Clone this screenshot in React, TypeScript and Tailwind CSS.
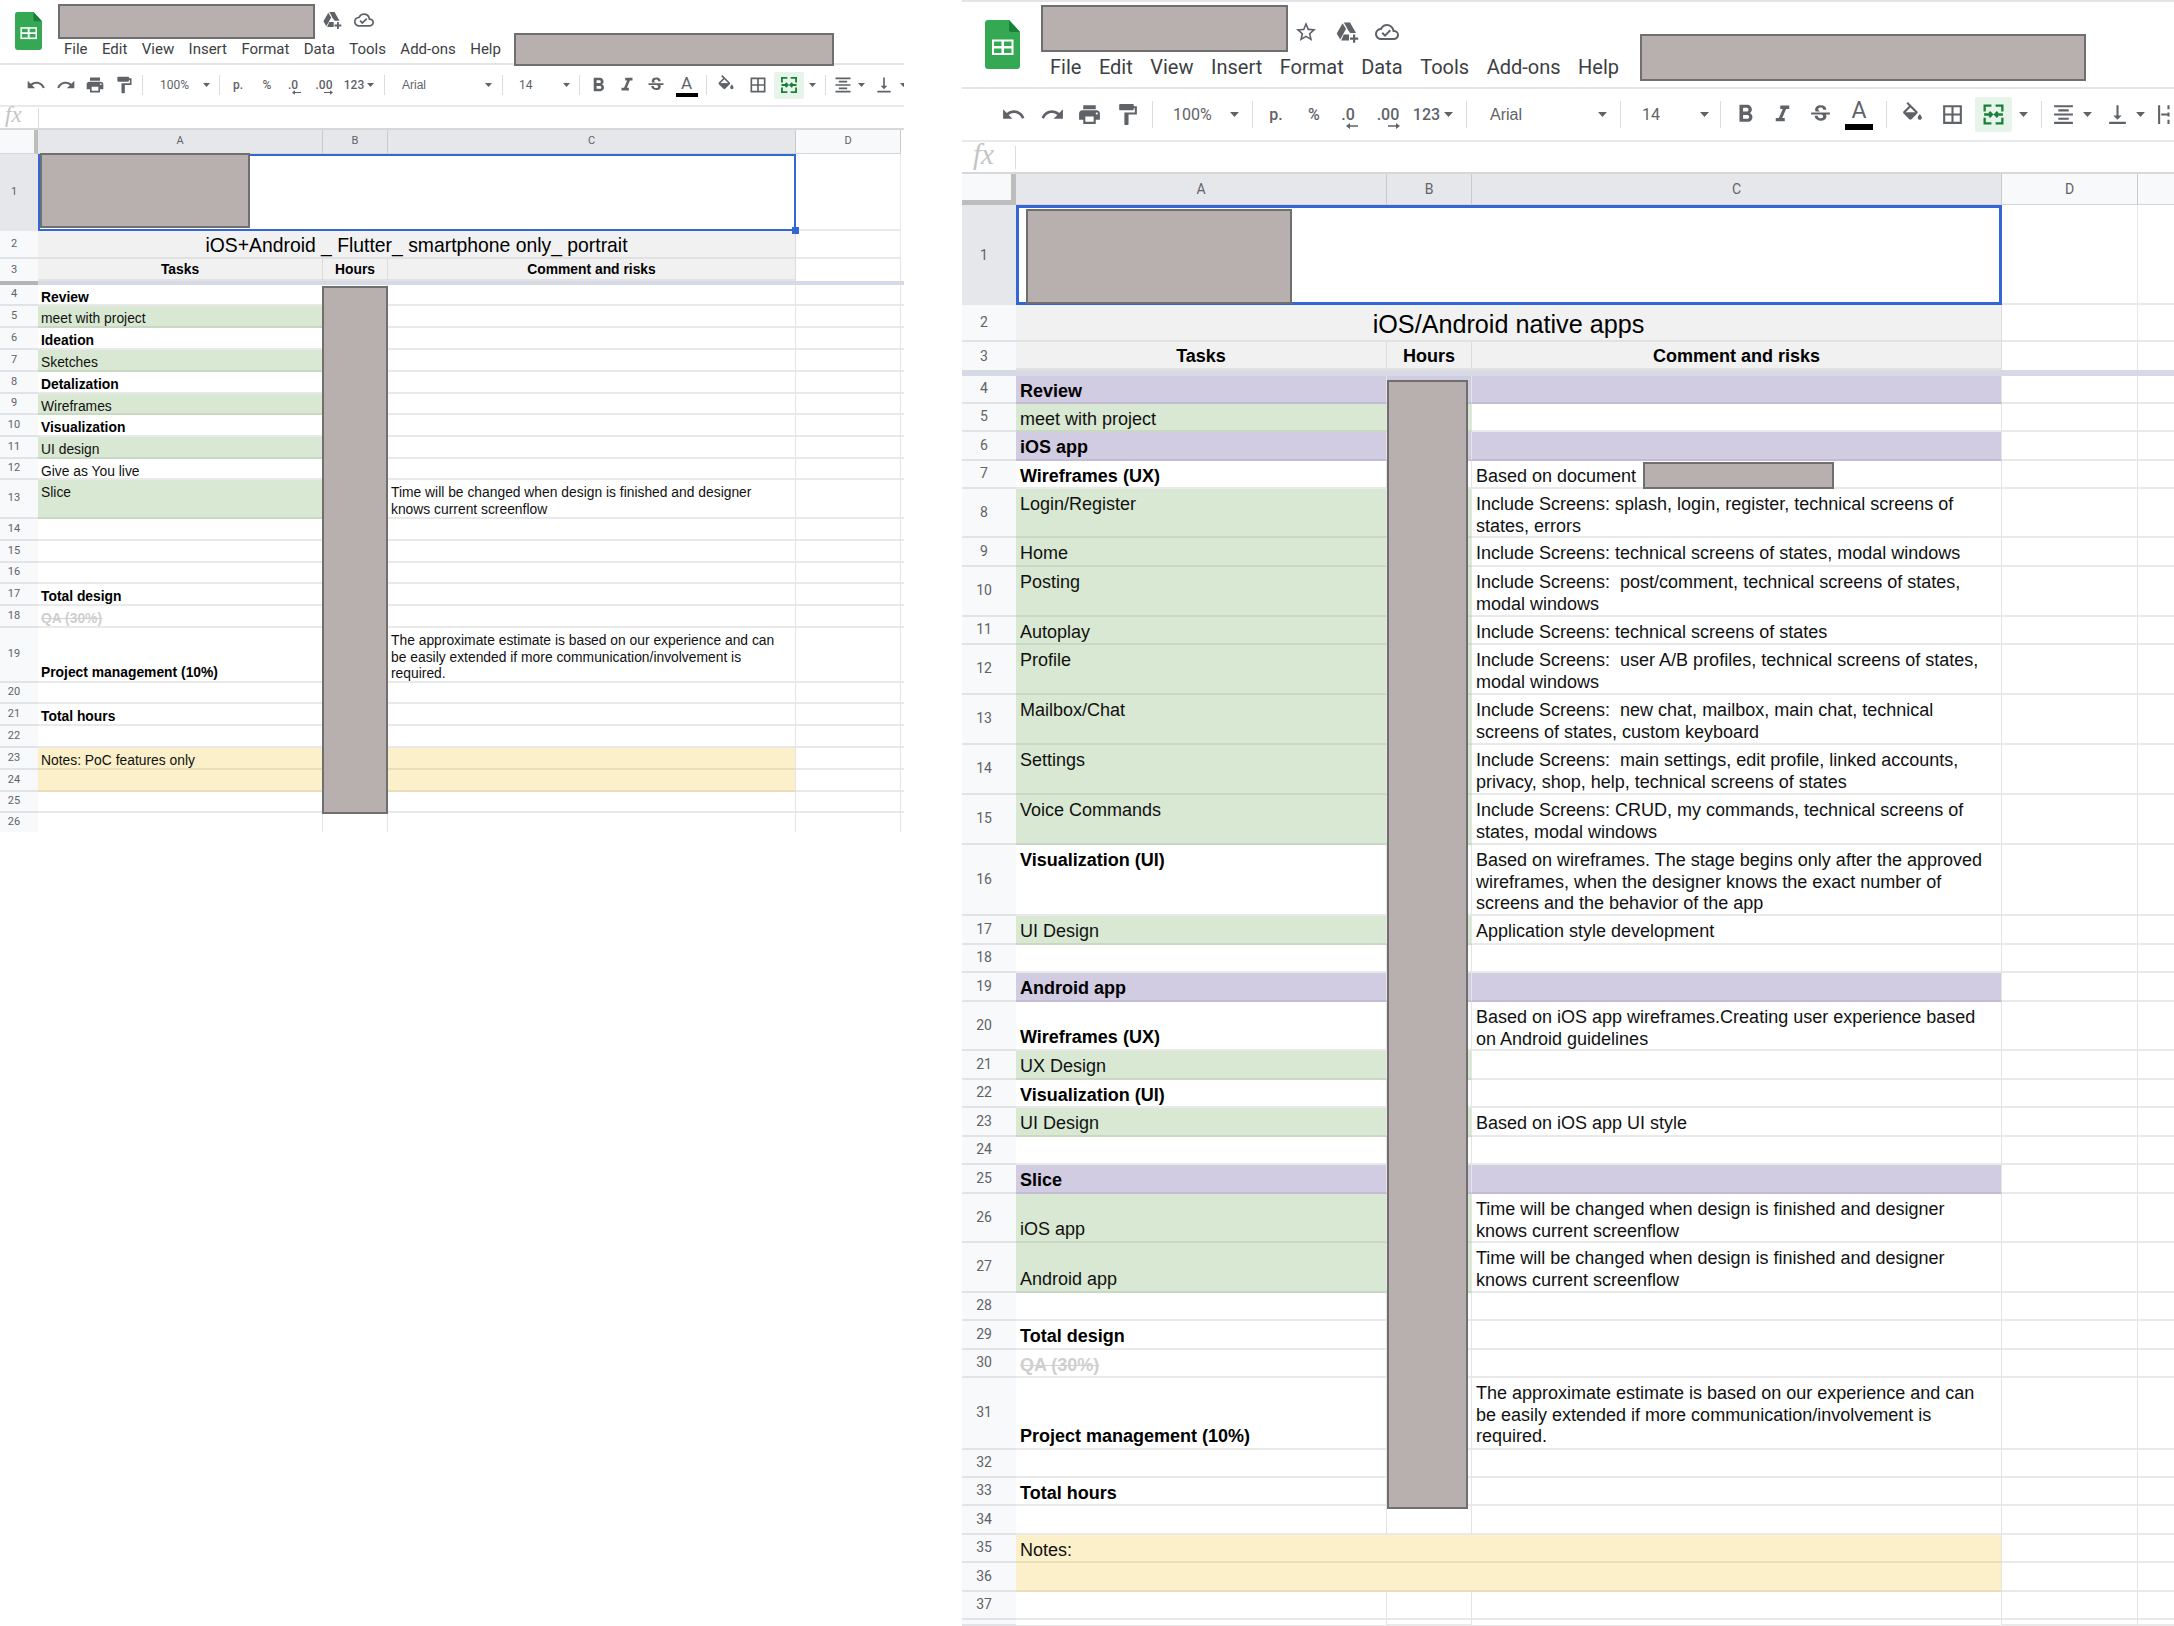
import React from "react";

type Fill = "" | "g" | "p" | "y";
type Row = { n: number; h: string; a?: string; as?: "" | "b" | "qa"; fa?: Fill; t?: string; fc?: Fill; bottom?: boolean; merged?: boolean; end?: boolean; blank?: boolean };

const fillCls: Record<string, string> = {
  "": "bg-white border-b-[#e9e9e9]",
  g: "bg-[#d9e8d2] border-b-[#c9d8c2]",
  p: "bg-[#d2cce3] border-b-[#c2bdd4]",
  y: "bg-[#fbf0c9] border-b-[#e8dfba]",
};

const leftRows: Row[] = [
  { n: 4, h: "h-[21px]", a: "Review", as: "b" },
  { n: 5, h: "h-[22px]", a: "meet with project", fa: "g" },
  { n: 6, h: "h-[22px]", a: "Ideation", as: "b" },
  { n: 7, h: "h-[22px]", a: "Sketches", fa: "g" },
  { n: 8, h: "h-[22px]", a: "Detalization", as: "b" },
  { n: 9, h: "h-[21px]", a: "Wireframes", fa: "g" },
  { n: 10, h: "h-[22px]", a: "Visualization", as: "b" },
  { n: 11, h: "h-[22px]", a: "UI design", fa: "g" },
  { n: 12, h: "h-[21px]", a: "Give as You live" },
  { n: 13, h: "h-[39px]", a: "Slice", fa: "g", t: "Time will be changed when design is finished and designer\nknows current screenflow" },
  { n: 14, h: "h-[22px]" },
  { n: 15, h: "h-[22px]" },
  { n: 16, h: "h-[21px]" },
  { n: 17, h: "h-[22px]", a: "Total design", as: "b" },
  { n: 18, h: "h-[22px]", a: "QA (30%)", as: "qa" },
  { n: 19, h: "h-[55px]", a: "Project management (10%)", as: "b", bottom: true, t: "The approximate estimate is based on our experience and can\nbe easily extended if more communication/involvement is\nrequired." },
  { n: 20, h: "h-[21px]" },
  { n: 21, h: "h-[22px]", a: "Total hours", as: "b" },
  { n: 22, h: "h-[22px]" },
  { n: 23, h: "h-[22px]", a: "Notes: PoC features only", fa: "y", fc: "y" },
  { n: 24, h: "h-[22px]", fa: "y", fc: "y" },
  { n: 25, h: "h-[21px]" },
  { n: 26, h: "h-[19px]", end: true },
];

const rightRows: Row[] = [
  { n: 4, h: "h-[28px]", a: "Review", as: "b", fa: "p", fc: "p" },
  { n: 5, h: "h-[28px]", a: "meet with project", fa: "g" },
  { n: 6, h: "h-[29px]", a: "iOS app", as: "b", fa: "p", fc: "p" },
  { n: 7, h: "h-[28px]", a: "Wireframes (UX)", as: "b", t: "Based on document" },
  { n: 8, h: "h-[49px]", a: "Login/Register", fa: "g", t: "Include Screens: splash, login, register, technical screens of\nstates, errors" },
  { n: 9, h: "h-[29px]", a: "Home", fa: "g", t: "Include Screens: technical screens of states, modal windows" },
  { n: 10, h: "h-[50px]", a: "Posting", fa: "g", t: "Include Screens:  post/comment, technical screens of states,\nmodal windows" },
  { n: 11, h: "h-[28px]", a: "Autoplay", fa: "g", t: "Include Screens: technical screens of states" },
  { n: 12, h: "h-[50px]", a: "Profile", fa: "g", t: "Include Screens:  user A/B profiles, technical screens of states,\nmodal windows" },
  { n: 13, h: "h-[50px]", a: "Mailbox/Chat", fa: "g", t: "Include Screens:  new chat, mailbox, main chat, technical\nscreens of states, custom keyboard" },
  { n: 14, h: "h-[50px]", a: "Settings", fa: "g", t: "Include Screens:  main settings, edit profile, linked accounts,\nprivacy, shop, help, technical screens of states" },
  { n: 15, h: "h-[50px]", a: "Voice Commands", fa: "g", t: "Include Screens: CRUD, my commands, technical screens of\nstates, modal windows" },
  { n: 16, h: "h-[71px]", a: "Visualization (UI)", as: "b", t: "Based on wireframes. The stage begins only after the approved\nwireframes, when the designer knows the exact number of\nscreens and the behavior of the app" },
  { n: 17, h: "h-[29px]", a: "UI Design", fa: "g", t: "Application style development" },
  { n: 18, h: "h-[28px]" },
  { n: 19, h: "h-[29px]", a: "Android app", as: "b", fa: "p", fc: "p" },
  { n: 20, h: "h-[49px]", a: "Wireframes (UX)", as: "b", bottom: true, t: "Based on iOS app wireframes.Creating user experience based\non Android guidelines" },
  { n: 21, h: "h-[29px]", a: "UX Design", fa: "g" },
  { n: 22, h: "h-[28px]", a: "Visualization (UI)", as: "b" },
  { n: 23, h: "h-[29px]", a: "UI Design", fa: "g", t: "Based on iOS app UI style" },
  { n: 24, h: "h-[28px]" },
  { n: 25, h: "h-[29px]", a: "Slice", as: "b", fa: "p", fc: "p" },
  { n: 26, h: "h-[49px]", a: "iOS app", fa: "g", bottom: true, t: "Time will be changed when design is finished and designer\nknows current screenflow" },
  { n: 27, h: "h-[50px]", a: "Android app", fa: "g", bottom: true, t: "Time will be changed when design is finished and designer\nknows current screenflow" },
  { n: 28, h: "h-[28px]" },
  { n: 29, h: "h-[29px]", a: "Total design", as: "b" },
  { n: 30, h: "h-[28px]", a: "QA (30%)", as: "qa" },
  { n: 31, h: "h-[72px]", a: "Project management (10%)", as: "b", bottom: true, t: "The approximate estimate is based on our experience and can\nbe easily extended if more communication/involvement is\nrequired." },
  { n: 32, h: "h-[28px]" },
  { n: 33, h: "h-[28px]", a: "Total hours", as: "b" },
  { n: 34, h: "h-[29px]" },
  { n: 35, h: "h-[28px]", a: "Notes:", fa: "y", fc: "y", merged: true },
  { n: 36, h: "h-[29px]", fa: "y", fc: "y", merged: true },
  { n: 37, h: "h-[28px]" },
  { n: 38, h: "h-[6px]", blank: true },
];

const small = {
  text: "text-[13.85px] leading-[16.5px]",
  hdr: "w-[38px] text-[11px] pr-[10px]",
  a: "w-[285px]",
  b: "w-[65px]",
  c: "w-[408px]",
  abc: "w-[758px]",
  d: "w-[105px]",
  e: "w-[3px]",
  pad: "pl-[3px] pt-[4px] pb-[1px]",
  icon: "size-[20px]",
  iconB: "size-[23px]",
  iconI: "size-[22px]",
  caret: "w-[7px] h-[4px]",
  tool: "text-[12px] leading-[18px]",
  A: "text-[17px] leading-[18px]",
  bar: "w-[22px] h-[4px] mt-[1px]",
  merge: "h-[27px]",
  sep: "h-[20px]",
  arrow: "w-[9px] h-[5px] -bottom-[1px]",
  widths: ["w-[28px]", "w-[31px]", "w-[27px]", "w-[31px]", "w-[6px]", "w-[53px] pl-[15px]", "w-[16px]", "w-[11px]", "w-[26px]", "w-[32px]", "w-[20px]", "w-[42px]", "w-[18px]", "w-[14px]", "w-[14px]", "w-[89px] pl-[11px]", "w-[16px]", "w-[13px]", "w-[49px] pl-[10px]", "w-[16px]", "w-[10px]", "w-[28px]", "w-[30px]", "w-[28px]", "w-[33px]", "w-[6px]", "w-[33px]", "w-[32px]", "w-[30px]", "w-[16px]", "w-[10px]", "w-[26px]", "w-[10px]", "w-[36px]", "w-[2px]", "w-[20px]"],
};

const big = {
  text: "text-[18px] leading-[21.6px]",
  hdr: "w-[54px] text-[14px] pr-[10px]",
  a: "w-[371px]",
  b: "w-[85px]",
  c: "w-[530px]",
  abc: "w-[986px]",
  d: "w-[136px]",
  e: "w-[36px]",
  pad: "pl-[4px] pt-[5px]",
  icon: "size-[25px]",
  iconB: "size-[29px]",
  iconI: "size-[27px]",
  caret: "w-[9px] h-[5px]",
  tool: "text-[16px] leading-[24px]",
  A: "text-[23px] leading-[24px]",
  bar: "w-[28px] h-[6px] mt-[1px]",
  merge: "h-[35px]",
  sep: "h-[27px]",
  arrow: "w-[12px] h-[6px] -bottom-[2px]",
  widths: ["w-[38px]", "w-[40px]", "w-[34px]", "w-[42px]", "w-[8px]", "w-[70px] pl-[17px]", "w-[16px]", "w-[20px]", "w-[28px]", "w-[48px]", "w-[20px]", "w-[60px]", "w-[17px]", "w-[26px]", "w-[10px]", "w-[121px] pl-[19px]", "w-[20px]", "w-[16px]", "w-[66px] pl-[14px]", "w-[20px]", "w-[12px]", "w-[38px]", "w-[36px]", "w-[40px]", "w-[38px]", "w-[16px]", "w-[36px]", "w-[45px]", "w-[37px]", "w-[22px]", "w-[14px]", "w-[30px]", "w-[18px]", "w-[42px]", "w-[4px]", "w-[52px]"],
};

type Cfg = typeof small;

const Redact = ({ className }: { className: string }) => (
  <div className={`bg-[#b8afaf] border-2 border-[#6f6f6f] box-border ${className}`} />
);

const M = ({ d, c, fill = "#5f6368" }: { d: string | string[]; c: string; fill?: string }) => (
  <svg viewBox="0 0 24 24" className={c} fill={fill}>
    {(Array.isArray(d) ? d : [d]).map((p, i) => (
      <path key={i} d={p} />
    ))}
  </svg>
);

const P = {
  star: "M22 9.24l-7.19-.62L12 2 9.19 8.63 2 9.24l5.46 4.73L5.82 21 12 17.27 18.18 21l-1.63-7.03L22 9.24zM12 15.4l-3.76 2.27 1-4.28-3.32-2.88 4.38-.38L12 6.1l1.71 4.04 4.38.38-3.32 2.88 1 4.28L12 15.4z",
  drive: ["M8.800 2.500h5.600l2.100 3.700-2.800 4.800z", "M7.600 3.200l3.400 5.900-5.800 10.400-3.500-6z", "M13.900 2.500h1.100l6 10.500h-6l-3-5.200z", "M8.700 14.500h5.300v6H6.200z", "M18 14.500h2.200v3h3v2.200h-3v3H18v-3h-3v-2.200h3z"],
  cloud: "M19.35 10.04A7.49 7.49 0 0 0 12 4C9.11 4 6.6 5.64 5.35 8.04A5.994 5.994 0 0 0 0 14c0 3.31 2.69 6 6 6h13c2.76 0 5-2.24 5-5 0-2.64-2.05-4.78-4.65-4.96zM19 18H6c-2.21 0-4-1.79-4-4 0-2.05 1.53-3.76 3.56-3.97l1.07-.11.5-.95A5.469 5.469 0 0 1 12 6c2.62 0 4.88 1.86 5.39 4.43l.3 1.5 1.53.11A2.98 2.98 0 0 1 22 15c0 1.65-1.35 3-3 3zm-9-3.82l-2.09-2.09L6.5 13.5 10 17l6.01-6.01-1.41-1.41z",
  undo: "M12.5 8c-2.65 0-5.05.99-6.9 2.6L2 7v9h9l-3.62-3.62c1.39-1.16 3.16-1.88 5.12-1.88 3.54 0 6.55 2.31 7.6 5.5l2.37-.78C21.08 11.03 17.15 8 12.5 8z",
  redo: "M18.4 10.6C16.55 8.99 14.15 8 11.5 8c-4.65 0-8.58 3.03-9.96 7.22L3.9 16c1.05-3.19 4.05-5.5 7.6-5.5 1.95 0 3.73.72 5.12 1.88L13 16h9V7l-3.6 3.6z",
  print: "M19 8H5c-1.66 0-3 1.34-3 3v6h4v4h12v-4h4v-6c0-1.66-1.34-3-3-3zm-3 11H8v-5h8v5zm3-7c-.55 0-1-.45-1-1s.45-1 1-1 1 .45 1 1-.45 1-1 1zm-1-9H6v4h12V3z",
  paint: "M18 4V3c0-.55-.45-1-1-1H5c-.55 0-1 .45-1 1v4c0 .55.45 1 1 1h12c.55 0 1-.45 1-1V6h1v4H9v11c0 .55.45 1 1 1h2c.55 0 1-.45 1-1v-9h8V4h-3z",
  bold: "M15.6 10.79c.97-.67 1.65-1.77 1.65-2.79 0-2.26-1.75-4-4-4H7v14h7.04c2.09 0 3.71-1.7 3.71-3.79 0-1.52-.86-2.82-2.15-3.42zM10 6.5h3c.83 0 1.5.67 1.5 1.5s-.67 1.5-1.5 1.5h-3v-3zm3.5 9H10v-3h3.5c.83 0 1.5.67 1.5 1.5s-.67 1.5-1.5 1.5z",
  italic: "M10 4v3h2.21l-3.42 8H6v3h8v-3h-2.21l3.42-8H18V4z",
  strike: "M6.85 7.08C6.85 4.37 9.45 3 12.24 3c1.64 0 3 .49 3.9 1.28.77.65 1.46 1.73 1.46 3.24h-3.01c0-.31-.05-.59-.15-.85-.29-.86-1.2-1.28-2.25-1.28-1.86 0-2.34.92-2.34 1.7 0 .48.25.88.74 1.21.38.25.77.48 1.41.7H7.39c-.21-.34-.54-.89-.54-1.92zM21 12v-2H3v2h9.62c1.15.45 1.96.75 1.96 1.97 0 1-.81 1.67-2.28 1.67-1.54 0-2.93-.54-2.93-2.51H6.4c0 .55.08 1.13.24 1.58.81 2.29 3.29 3.3 5.67 3.3 2.27 0 5.3-.89 5.3-4.05 0-.3-.01-1.16-.48-1.94H21V12z",
  fill: ["M16.56 8.94L7.62 0 6.21 1.41l2.38 2.38-5.15 5.15c-.59.59-.59 1.54 0 2.12l5.5 5.5c.29.29.68.44 1.06.44s.77-.15 1.06-.44l5.5-5.5c.59-.58.59-1.53 0-2.12zM5.21 10L10 5.21 14.79 10H5.21zM19 11.5s-2 2.17-2 3.5c0 1.1.9 2 2 2s2-.9 2-2c0-1.33-2-3.5-2-3.5z", "M5 10h10l-5 5.5z"],
  borders: "M3 3v18h18V3H3zm8 16H5v-6h6v6zm0-8H5V5h6v6zm8 8h-6v-6h6v6zm0-8h-6V5h6v6z",
  align: "M7 15v2h10v-2H7zm-4 6h18v-2H3v2zm0-8h18v-2H3v2zm4-6v2h10V7H7zM3 3v2h18V3H3z",
  valign: "M16 13h-3V3h-2v10H8l4 4 4-4zM4 19v2h16v-2H4z",
};

const Caret = ({ c }: { c: Cfg }) => (
  <svg viewBox="0 0 8 4.500" className={`${c.caret} shrink-0`} fill="#5f6368">
    <path d="M0 0h8L4 4.500z" />
  </svg>
);

const Arrow = ({ c, dir }: { c: Cfg; dir: "l" | "r" }) => (
  <svg viewBox="0 0 12 6" className={`absolute ${c.arrow} ${dir === "l" ? "-right-[3px]" : "-right-[1px]"}`} fill="#5f6368">
    <path d={dir === "l" ? "M12 2.200H4V0L0 3l4 3V3.800h8z" : "M0 2.200h8V0l4 3-4 3V3.800H0z"} />
  </svg>
);

const Logo = ({ className }: { className: string }) => (
  <svg viewBox="0 0 35 49" className={className}>
    <path d="M3 0h21l11 12v34a3 3 0 0 1-3 3H3a3 3 0 0 1-3-3V3a3 3 0 0 1 3-3z" fill="#34a853" />
    <path d="M24 0l11 12H26a2 2 0 0 1-2-2z" fill="#188038" />
    <path d="M7 19.500h21.500V35H7z" fill="#fff" />
    <path d="M9 21.500h7.500v4.500H9zM19 21.500h7.500v4.500H19zM9 28.500h7.500V33H9zM19 28.500h7.500V33H19z" fill="#34a853" />
  </svg>
);

const Sep = ({ c }: { c: Cfg }) => <div className={`w-px bg-[#dadce0] ${c.sep}`} />;

const Toolbar = ({ c }: { c: Cfg }) => {
  const items: React.ReactNode[] = [
    <M d={P.undo} c={c.icon} />,
    <M d={P.redo} c={c.icon} />,
    <M d={P.print} c={c.icon} />,
    <M d={P.paint} c={c.icon} />,
    <Sep c={c} />,
    <span className={c.tool}>100%</span>,
    <Caret c={c} />,
    <Sep c={c} />,
    <span className={`${c.tool} font-medium`}>p.</span>,
    <span className={`${c.tool} font-medium`}>%</span>,
    <span className={`${c.tool} font-medium relative`}>.0<Arrow c={c} dir="l" /></span>,
    <span className={`${c.tool} font-medium relative`}>.00<Arrow c={c} dir="r" /></span>,
    <span className={`${c.tool} font-medium`}>123</span>,
    <Caret c={c} />,
    <Sep c={c} />,
    <span className={`${c.tool} font-['Liberation_Sans',sans-serif]`}>Arial</span>,
    <Caret c={c} />,
    <Sep c={c} />,
    <span className={c.tool}>14</span>,
    <Caret c={c} />,
    <Sep c={c} />,
    <M d={P.bold} c={`${c.iconB} shrink-0`} />,
    <M d={P.italic} c={`${c.iconI} shrink-0`} />,
    <M d={P.strike} c={c.icon} />,
    <div className="flex flex-col items-center">
      <span className={c.A}>A</span>
      <div className={`bg-black ${c.bar}`} />
    </div>,
    <Sep c={c} />,
    <M d={P.fill} c={c.icon} />,
    <M d={P.borders} c={c.icon} />,
    <div className={`w-full flex items-center justify-center rounded-[2px] bg-[#e6f4ea] ${c.merge}`}>
      <svg viewBox="0 0 24 24" className={c.icon} fill="none" stroke="#188038" strokeWidth="2.200">
        <path d="M3.500 9V3.500H10M14 3.500h6.500V9M3.500 15v5.500H10M14 20.500h6.500V15M3 12h7M8 9.500l2.500 2.500L8 14.500M21 12h-7M16 9.500L13.500 12l2.500 2.500" />
      </svg>
    </div>,
    <Caret c={c} />,
    <Sep c={c} />,
    <M d={P.align} c={c.icon} />,
    <Caret c={c} />,
    <M d={P.valign} c={c.icon} />,
    <Caret c={c} />,
    <svg viewBox="0 0 24 24" className={`${c.icon} shrink-0`} fill="none" stroke="#5f6368" strokeWidth="2">
      <path d="M3 3v18M12 3v4M12 10v4M12 17v4M5 12h6" />
    </svg>,
  ];
  return (
    <>
      {items.map((it, i) => (
        <div key={i} className={`h-full shrink-0 flex items-center box-border ${c.widths[i]} ${/pl-/.test(c.widths[i]) ? "justify-start" : "justify-center"}`}>
          {it}
        </div>
      ))}
    </>
  );
};

const aCls = (r: Row) =>
  r.as === "b" ? "font-bold text-black" : r.as === "qa" ? "font-bold text-[#cfcfcf] line-through" : "text-[#111]";

const DataRow = ({ r, c, greenB }: { r: Row; c: Cfg; greenB: boolean }) => {
  const v = r.bottom ? "flex flex-col justify-end" : "";
  const line = r.end ? "border-b-0" : "border-b-2";
  const base = `${line} border-r border-r-[#e4e4e4] box-border shrink-0 h-full overflow-hidden`;
  const fa = fillCls[r.fa ?? ""];
  const fc = fillCls[r.fc ?? ""];
  return (
    <div className={`flex font-['Liberation_Sans',sans-serif] ${c.text} ${r.h}`}>
      <div className={`${c.hdr} ${line} shrink-0 h-full box-border border-b-[#e2e3e6] bg-[#f8f9fa] flex items-center justify-center text-[#5f6368] font-['Roboto',sans-serif]`}>
        {r.blank ? null : r.n}
      </div>
      {r.merged ? (
        <div className={`${base} ${fa} ${c.abc} ${c.pad} ${aCls(r)}`}>{r.a}</div>
      ) : (
        <>
          <div className={`${base} ${fa} ${c.a} ${c.pad} ${v} ${aCls(r)}`}>{r.a}</div>
          <div className={`${base} ${greenB ? fa : fillCls[""]} ${c.b}`} />
          <div className={`${base} ${fc} ${c.c} ${c.pad} whitespace-pre text-[#111]`}>{r.t}</div>
        </>
      )}
      <div className={`${base} ${fillCls[""]} ${c.d}`} />
      <div className={`${c.e} ${line} h-full shrink-0 box-border border-b-[#e9e9e9]`} />
    </div>
  );
};

const ColHead = ({ c, ch, w, on }: { c: Cfg; ch: string; w: string; on?: boolean }) => (
  <div className={`${w} shrink-0 h-full box-border border-r border-r-[#c8cacd] border-b border-b-[#d5d6d9] flex items-center justify-center text-[#5f6368] font-['Roboto',sans-serif] ${c.hdr.split(" ")[1]} ${on ? "bg-[#e6e7ea]" : "bg-[#f8f9fa]"}`}>
    {ch}
  </div>
);

export default function App() {
  const menu = ["File", "Edit", "View", "Insert", "Format", "Data", "Tools", "Add-ons", "Help"];
  const hdrCell = "box-border border-r border-r-[#dcdcdc] border-b-2 border-b-[#e2e2e2] bg-[#f1f1f1] flex items-center justify-center font-bold text-black shrink-0 h-full";
  const numCell = "shrink-0 h-full box-border flex items-center justify-center pr-[10px] text-[#5f6368] font-['Roboto',sans-serif]";
  return (
    <div className="w-[2174px] h-[1626px] bg-white flex items-start overflow-hidden font-['Roboto',sans-serif]">
      {/* LEFT SHEET */}
      <div className="relative w-[904px] h-[832px] shrink-0 overflow-hidden">
        <div className="flex h-[65px] border-b-2 border-b-[#e3e3e8] box-border">
          <Logo className="w-[27px] h-[38px] ml-[15px] mt-[12px] shrink-0" />
          <div className="w-[456px] ml-[16px] pt-[4px] shrink-0">
            <div className="flex">
              <Redact className="w-[257px] h-[35px]" />
              <M d={P.drive} c="size-[20px] ml-[7px] mt-[6px]" />
              <M d={P.cloud} c="size-[20px] ml-[12px] mt-[6px]" />
            </div>
            <div className="flex gap-[14.4px] pl-[6px] mt-[1px] text-[15px] leading-[18px] text-[#3c4043]">
              {menu.map((m) => (
                <span key={m}>{m}</span>
              ))}
            </div>
          </div>
          <Redact className="w-[320px] h-[33px] mt-[33px] shrink-0 relative" />
        </div>
        <div className="flex h-[42px] pl-[22px] border-b-2 border-b-[#e8e8ee] box-border text-[#5f6368]">
          <Toolbar c={small} />
        </div>
        <div className="flex items-center h-[23px] border-b-2 border-b-[#d8d8d8] box-border">
          <span className="w-[38px] pl-[5px] -mt-[5px] font-['Liberation_Serif',serif] italic text-[23px] leading-[20px] text-[#c4c4c4]">fx</span>
          <div className="w-px h-[20px] bg-[#dadce0]" />
        </div>
        <div className="flex h-[24px]">
          <div className="w-[38px] h-full shrink-0 box-border bg-[#f8f9fa] border-r-[4px] border-r-[#bdbdbd] border-b border-b-[#d5d6d9]" />
          <ColHead c={small} ch="A" w={small.a} on />
          <ColHead c={small} ch="B" w={small.b} on />
          <ColHead c={small} ch="C" w={small.c} on />
          <ColHead c={small} ch="D" w={small.d} />
        </div>
        <div className="flex h-[77px]">
          <div className={`${numCell} w-[38px] text-[11px] bg-[#e6e7ea]`}>1</div>
          <div className="relative w-[758px] h-full box-border border-2 border-[#3367d6] shrink-0">
            <div className="absolute -right-[5px] -bottom-[5px] size-[7px] bg-[#3367d6]" />
          </div>
          <div className="w-[105px] h-full box-border border-r border-b-2 border-[#e9e9e9]" />
        </div>
        <div className="flex h-[28px]">
          <div className={`${numCell} w-[38px] text-[11px] bg-[#f8f9fa] border-b-2 border-b-[#e2e3e6]`}>2</div>
          <div className={`${hdrCell} w-[758px] pt-[3px] !font-normal font-['Liberation_Sans',sans-serif] text-[19.35px]`}>iOS+Android _ Flutter_ smartphone only_ portrait</div>
          <div className="w-[105px] h-full box-border border-r border-b-2 border-[#e9e9e9]" />
        </div>
        <div className="flex h-[22px] font-['Liberation_Sans',sans-serif] text-[13.85px]">
          <div className={`${numCell} w-[38px] text-[11px] bg-[#f8f9fa]`}>3</div>
          <div className={`${hdrCell} w-[285px] pt-[1px]`}>Tasks</div>
          <div className={`${hdrCell} w-[65px] pt-[1px]`}>Hours</div>
          <div className={`${hdrCell} w-[408px] pt-[1px]`}>Comment and risks</div>
          <div className="w-[105px] h-full box-border border-r border-[#e4e4e4]" />
        </div>
        <div className="flex h-[4px]">
          <div className="w-[38px] bg-[#b5b5b5]" />
          <div className="flex-1 bg-[#d6dae4]" />
        </div>
        {leftRows.map((r) => (
          <DataRow key={r.n} r={r} c={small} greenB={false} />
        ))}
        <Redact className="absolute left-[40px] top-[153px] w-[210px] h-[75px]" />
        <Redact className="absolute left-[322px] top-[286px] w-[66px] h-[528px]" />
      </div>

      {/* RIGHT SHEET */}
      <div className="relative w-[1212px] h-[1626px] ml-[58px] shrink-0 overflow-hidden">
        <div className="flex h-[89px] border-t-2 border-t-[#e3e3e8] border-b-2 border-b-[#e3e3e8] box-border">
          <Logo className="w-[35px] h-[49px] ml-[23px] mt-[18px] shrink-0" />
          <div className="w-[599px] ml-[21px] pt-[3px] shrink-0">
            <div className="flex">
              <Redact className="w-[247px] h-[47px]" />
              <M d={P.star} c="size-[24px] ml-[6px] mt-[15px]" />
              <M d={P.drive} c="size-[24px] ml-[17px] mt-[15px]" />
              <M d={P.cloud} c="size-[24px] ml-[16px] mt-[15px]" />
            </div>
            <div className="flex gap-[17.5px] pl-[9px] mt-[3px] text-[20px] leading-[24px] text-[#3c4043]">
              {menu.map((m) => (
                <span key={m}>{m}</span>
              ))}
            </div>
          </div>
          <Redact className="w-[446px] h-[47px] mt-[32px] shrink-0" />
        </div>
        <div className="flex h-[53px] pl-[32px] border-b-2 border-b-[#e8e8ee] box-border text-[#5f6368]">
          <Toolbar c={big} />
        </div>
        <div className="flex items-center h-[32px] border-b-2 border-b-[#d8d8d8] box-border">
          <span className="w-[53px] pl-[11px] -mt-[6px] font-['Liberation_Serif',serif] italic text-[29px] leading-[24px] text-[#c4c4c4]">fx</span>
          <div className="w-px h-[23px] bg-[#dadce0]" />
        </div>
        <div className="flex h-[31px]">
          <div className="w-[54px] h-full shrink-0 box-border bg-[#f8f9fa] border-r-[5px] border-r-[#bdbdbd] border-b-[5px] border-b-[#bdbdbd]" />
          <ColHead c={big} ch="A" w={big.a} on />
          <ColHead c={big} ch="B" w={big.b} on />
          <ColHead c={big} ch="C" w={big.c} on />
          <ColHead c={big} ch="D" w={big.d} />
          <div className="w-[36px] h-full box-border bg-[#f8f9fa] border-b border-b-[#d5d6d9]" />
        </div>
        <div className="flex h-[100px]">
          <div className={`${numCell} w-[54px] text-[14px] bg-[#e6e7ea]`}>1</div>
          <div className="w-[986px] h-full box-border border-[3px] border-[#3367d6] shrink-0" />
          <div className="w-[136px] h-full box-border border-r border-b-2 border-[#e9e9e9]" />
          <div className="w-[36px] h-full box-border border-b-2 border-[#e9e9e9]" />
        </div>
        <div className="flex h-[37px]">
          <div className={`${numCell} w-[54px] text-[14px] bg-[#f8f9fa] border-b-2 border-b-[#e2e3e6]`}>2</div>
          <div className={`${hdrCell} w-[986px] pt-[4px] !font-normal font-['Liberation_Sans',sans-serif] text-[25.2px]`}>iOS/Android native apps</div>
          <div className="w-[136px] h-full box-border border-r border-b-2 border-[#e9e9e9]" />
          <div className="w-[36px] h-full box-border border-b-2 border-[#e9e9e9]" />
        </div>
        <div className="flex h-[28px] font-['Liberation_Sans',sans-serif] text-[18px]">
          <div className={`${numCell} w-[54px] text-[14px] bg-[#f8f9fa]`}>3</div>
          <div className={`${hdrCell} w-[371px] pt-[2px]`}>Tasks</div>
          <div className={`${hdrCell} w-[85px] pt-[2px]`}>Hours</div>
          <div className={`${hdrCell} w-[530px] pt-[2px]`}>Comment and risks</div>
          <div className="w-[136px] h-full box-border border-r border-[#e4e4e4]" />
        </div>
        <div className="h-[6px] bg-[#d6dae4]" />
        {rightRows.map((r) => (
          <DataRow key={r.n} r={r} c={big} greenB />
        ))}
        <Redact className="absolute left-[64px] top-[209px] w-[266px] h-[95px]" />
        <Redact className="absolute left-[425px] top-[380px] w-[81px] h-[1129px]" />
        <Redact className="absolute left-[681px] top-[462px] w-[191px] h-[27px]" />
      </div>
    </div>
  );
}
